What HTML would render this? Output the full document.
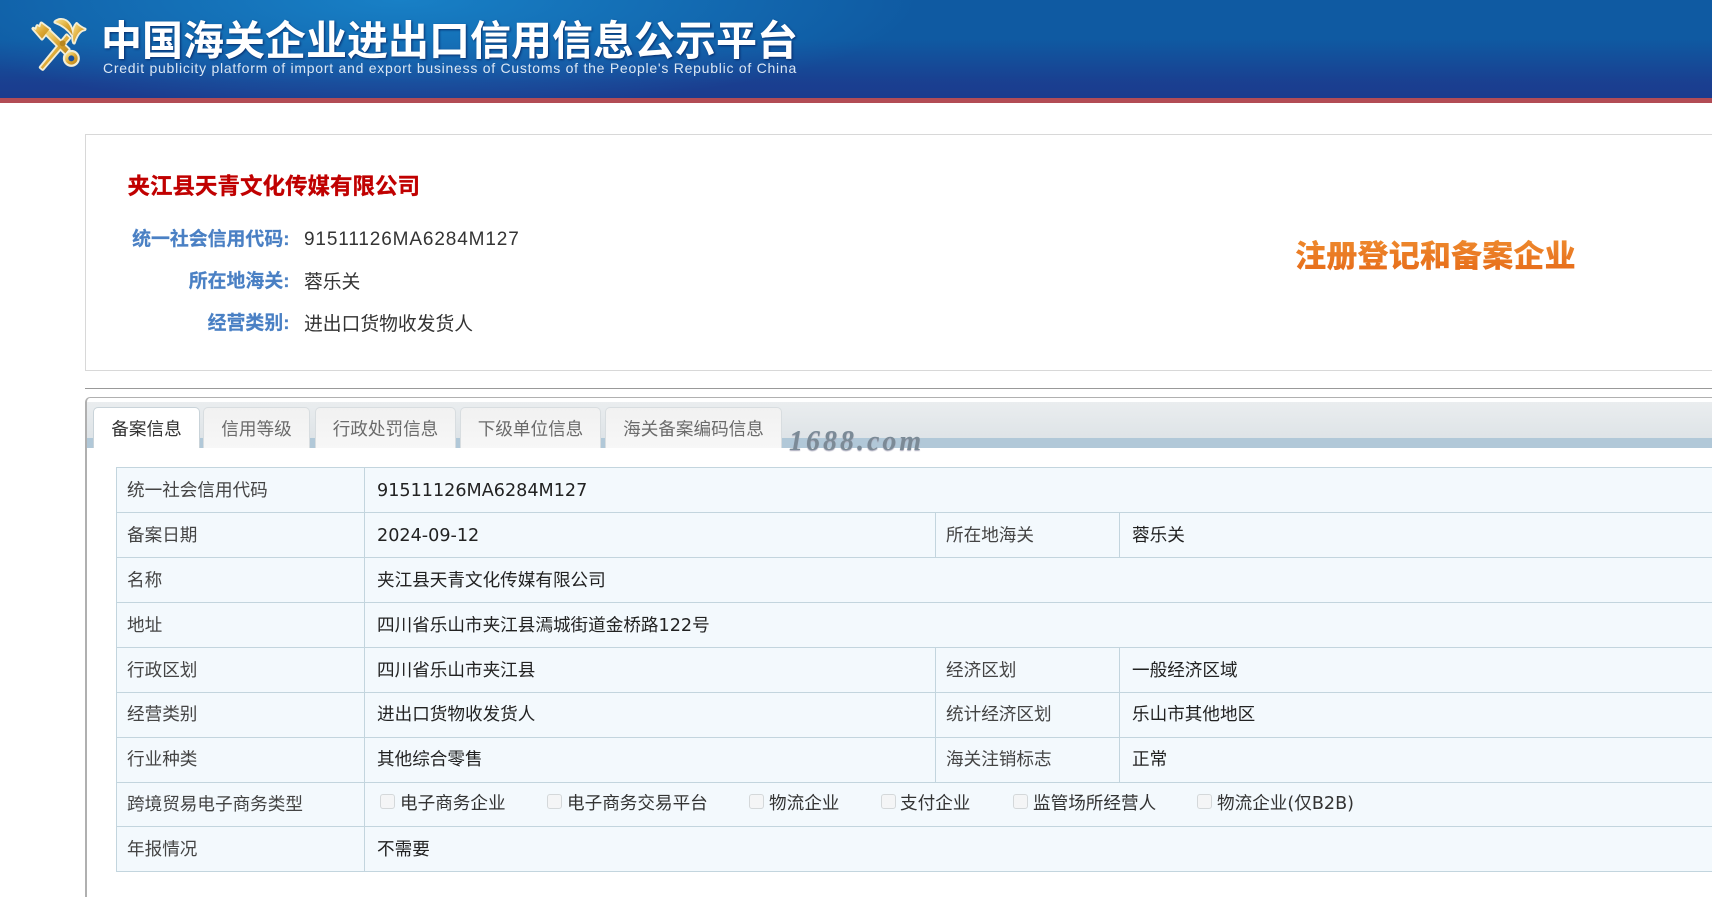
<!DOCTYPE html>
<html lang="zh-CN">
<head>
<meta charset="utf-8">
<title>中国海关企业进出口信用信息公示平台</title>
<style>
*{box-sizing:border-box}
html,body{margin:0;padding:0;width:1712px;height:881px;overflow:hidden;background:#fff;color:#333;font-family:"Liberation Sans","Noto Sans CJK SC",sans-serif}
.header{position:absolute;left:0;top:0;width:1712px;height:98px;background:radial-gradient(ellipse 520px 110px at 400px 0,#1880c6 0,rgba(24,128,198,0) 100%),linear-gradient(#0f5aa2 0,#0f5aa2 40%,#1a3f90 85%,#1a3c8e 100%)}
.redline{position:absolute;left:0;top:98px;width:1712px;height:5px;background:#b24c55}
.logo{position:absolute;left:28px;top:10px;width:64px;height:66px}
.t1{position:absolute;left:101px;top:13px;font-size:41px;line-height:56px;font-weight:700;color:#fff;white-space:nowrap;text-shadow:1px 1px 2px rgba(5,30,90,.8)}
.t2{position:absolute;left:103px;top:60px;font-size:14px;line-height:16px;color:#dbe7f4;white-space:nowrap;letter-spacing:.75px}
.card{position:absolute;left:85px;top:134px;width:1700px;height:237px;border:1px solid #d8d8d8;background:#fff}
.name{position:absolute;left:127.5px;top:172px;font-size:22.5px;line-height:30px;font-weight:700;color:#c00000;white-space:nowrap;-webkit-text-stroke:.3px #c00000}
.lab{position:absolute;width:170px;left:119.5px;text-align:right;font-size:18.9px;line-height:28px;font-weight:700;color:#4a80c4;white-space:nowrap;-webkit-text-stroke:.2px #4a80c4}
.val{position:absolute;left:304px;font-size:18.8px;line-height:28px;color:#333;white-space:nowrap}
.badge{position:absolute;left:1295px;top:238px;font-size:31.2px;line-height:37px;font-weight:900;white-space:nowrap;background:linear-gradient(#ee8a2e,#e66a18);-webkit-background-clip:text;background-clip:text;color:transparent}
.rule{position:absolute;left:85px;top:388px;width:1627px;height:1px;background:#999}
.panel{position:absolute;left:85px;top:397px;width:1700px;height:500px;border:1px solid #b0b0b0;border-width:1px 0 0 2px;border-radius:5px 0 0 0;background:#fff}
.tabbar{position:absolute;left:87px;top:402px;width:1625px;height:46px;background:linear-gradient(#b1c8d8 0,#b1c8d8 100%) 0 36px/100% 10px no-repeat,linear-gradient(#eaedef,#dbe1e5)}
.tab{position:absolute;top:407px;height:41px;border:1px solid #d8dde0;border-bottom:0;border-radius:5px 5px 0 0;background:linear-gradient(#f1f1f1,#f7f7f7);text-align:center;font-size:17.6px;line-height:42px;color:#6b6b6b;white-space:nowrap}
.tab.on{background:#fff;color:#333;border-color:#c9d3d9}
.wm{position:absolute;left:789px;top:428px;font-family:"Liberation Serif",serif;font-style:italic;font-weight:700;font-size:28px;line-height:28px;letter-spacing:3px;color:#7b8a96;text-shadow:0 1px 1px #aab;white-space:nowrap}
table{position:absolute;left:116px;top:467px;width:1700px;border-collapse:collapse;table-layout:fixed;background:#f3f9fd;font-size:17.6px;font-family:"DejaVu Sans","Noto Sans CJK SC",sans-serif}
td{border:1px solid #c3d5de;height:45px;padding:1px 0 0 10px;line-height:24px;color:#444;white-space:nowrap;vertical-align:middle}
td.v{padding-left:12px;color:#222}
tr.up td{padding-top:0;padding-bottom:1px}
.cb{position:absolute;top:794px;width:15px;height:15px;border:1px solid #d4d8da;border-radius:3px;background:#f4f5f6}
.cl{position:absolute;top:791px;font-size:17.6px;line-height:26px;color:#333;white-space:nowrap;font-family:"DejaVu Sans","Noto Sans CJK SC",sans-serif}
</style>
</head>
<body>
<div class="header"></div>
<div class="redline"></div>
<svg class="logo" viewBox="0 0 192 198">
  <defs>
    <linearGradient id="g" x1="0" y1="0" x2="1" y2="1">
      <stop offset="0" stop-color="#f8e08a"/>
      <stop offset=".55" stop-color="#dca733"/>
      <stop offset="1" stop-color="#c08a1e"/>
    </linearGradient>
  </defs>
  <g stroke="#f3eed6" stroke-width="11" stroke-linejoin="round" fill="#f3eed6">
    <path d="M38 172L44 177L124 84L116 76Z"/>
    <path d="M82 36C100 22 128 28 134 76C122 58 104 44 82 36Z"/>
    <path d="M170 58C156 60 146 72 138 98C132 84 136 52 146 42C152 48 160 54 170 58Z"/>
    <path d="M52 70L62 60L122 118L112 130Z"/>
    <path d="M16 56L24 60L28 48L36 52L40 40L64 58L42 86Z"/>
    <circle cx="130" cy="145" r="20"/>
  </g>
  <g fill="url(#g)">
    <path d="M38 172L44 177L124 84L116 76Z"/>
    <path d="M82 36C100 22 128 28 134 76C122 58 104 44 82 36Z"/>
    <path d="M170 58C156 60 146 72 138 98C132 84 136 52 146 42C152 48 160 54 170 58Z"/>
    <path d="M52 70L62 60L122 118L112 130Z"/>
    <path d="M16 56L24 60L28 48L36 52L40 40L64 58L42 86Z"/>
    <circle cx="104" cy="100" r="9" fill="#b8861f"/>
  </g>
  <circle cx="130" cy="145" r="14" fill="#1a4f9a" stroke="url(#g)" stroke-width="10"/>
</svg>
<div class="t1">中国海关企业进出口信用信息公示平台</div>
<div class="t2">Credit publicity platform of import and export business of Customs of the People's Republic of China</div>

<div class="card"></div>
<div class="name">夹江县天青文化传媒有限公司</div>
<div class="lab" style="top:226px">统一社会信用代码:</div>
<div class="val" style="top:226px;font-size:19px;letter-spacing:.87px">91511126MA6284M127</div>
<div class="lab" style="top:268px">所在地海关:</div>
<div class="val" style="top:268px">蓉乐关</div>
<div class="lab" style="top:310px">经营类别:</div>
<div class="val" style="top:310px">进出口货物收发货人</div>
<div class="badge">注册登记和备案企业</div>

<div class="rule"></div>
<div class="panel"></div>
<div class="tabbar"></div>
<div class="tab on" style="left:93px;width:107px">备案信息</div>
<div class="tab" style="left:203px;width:107px">信用等级</div>
<div class="tab" style="left:315px;width:141px">行政处罚信息</div>
<div class="tab" style="left:460px;width:141px">下级单位信息</div>
<div class="tab" style="left:605px;width:177px">海关备案编码信息</div>
<div class="wm">1688.com</div>

<table>
<colgroup><col style="width:248px"><col style="width:571px"><col style="width:184px"><col></colgroup>
<tr><td>统一社会信用代码</td><td class="v" colspan="3">91511126MA6284M127</td></tr>
<tr><td>备案日期</td><td class="v">2024-09-12</td><td>所在地海关</td><td class="v">蓉乐关</td></tr>
<tr><td>名称</td><td class="v" colspan="3">夹江县天青文化传媒有限公司</td></tr>
<tr><td>地址</td><td class="v" colspan="3">四川省乐山市夹江县漹城街道金桥路122号</td></tr>
<tr><td>行政区划</td><td class="v">四川省乐山市夹江县</td><td>经济区划</td><td class="v">一般经济区域</td></tr>
<tr class="up"><td>经营类别</td><td class="v">进出口货物收发货人</td><td>统计经济区划</td><td class="v">乐山市其他地区</td></tr>
<tr class="up"><td>行业种类</td><td class="v">其他综合零售</td><td>海关注销标志</td><td class="v">正常</td></tr>
<tr><td style="height:44px">跨境贸易电子商务类型</td><td class="v" colspan="3" style="height:44px"></td></tr>
<tr><td>年报情况</td><td class="v" colspan="3">不需要</td></tr>
</table>

<span class="cb" style="left:380px"></span><span class="cl" style="left:400px">电子商务企业</span>
<span class="cb" style="left:547px"></span><span class="cl" style="left:567px">电子商务交易平台</span>
<span class="cb" style="left:749px"></span><span class="cl" style="left:769px">物流企业</span>
<span class="cb" style="left:881px"></span><span class="cl" style="left:900px">支付企业</span>
<span class="cb" style="left:1013px"></span><span class="cl" style="left:1033px">监管场所经营人</span>
<span class="cb" style="left:1197px"></span><span class="cl" style="left:1217px">物流企业(仅B2B)</span>
</body>
</html>
